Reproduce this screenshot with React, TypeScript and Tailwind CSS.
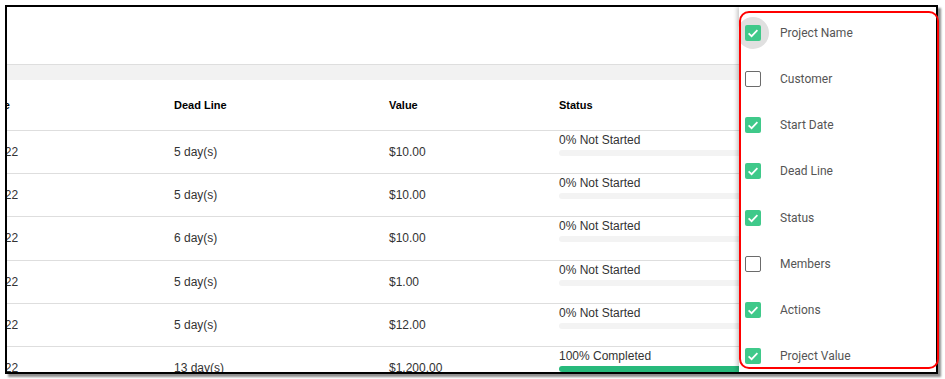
import React from "react";

const rows = [
  { date: "12/20/2022", dead: "5 day(s)", value: "$10.00", pct: 0, status: "0% Not Started" },
  { date: "12/20/2022", dead: "5 day(s)", value: "$10.00", pct: 0, status: "0% Not Started" },
  { date: "12/19/2022", dead: "6 day(s)", value: "$10.00", pct: 0, status: "0% Not Started" },
  { date: "12/20/2022", dead: "5 day(s)", value: "$1.00", pct: 0, status: "0% Not Started" },
  { date: "12/20/2022", dead: "5 day(s)", value: "$12.00", pct: 0, status: "0% Not Started" },
  { date: "12/12/2022", dead: "13 day(s)", value: "$1,200.00", pct: 100, status: "100% Completed" },
];

const options = [
  { label: "Project Name", checked: true, focus: true },
  { label: "Customer", checked: false },
  { label: "Start Date", checked: true },
  { label: "Dead Line", checked: true },
  { label: "Status", checked: true },
  { label: "Members", checked: false },
  { label: "Actions", checked: true },
  { label: "Project Value", checked: true },
];

function Box({ checked, focus }: { checked: boolean; focus?: boolean }) {
  return (
    <div className="relative w-[16px] h-[16px] shrink-0">
      {focus && (
        <div className="absolute left-[-8px] top-[-8px] w-[32px] h-[32px] rounded-full bg-[#e0e0e0]" />
      )}
      {checked ? (
        <div className="relative w-[16px] h-[16px] rounded-[2px] bg-[#3fc98a] flex items-center justify-center">
          <svg width="16" height="16" viewBox="0 0 16 16">
            <path d="M3.6 8.3 L6.6 11.2 L12.4 5.2" fill="none" stroke="white" strokeWidth="1.7" />
          </svg>
        </div>
      ) : (
        <div className="relative w-[16px] h-[16px] rounded-[2px] border-[1.5px] border-[#6b6b6b] bg-white" />
      )}
    </div>
  );
}

export default function App() {
  return (
    <div className="relative w-[945px] h-[379px] bg-white overflow-hidden" style={{ fontFamily: "Arial, 'Liberation Sans', sans-serif" }}>
      <div className="relative ml-[5px] mt-[5px] w-[933px] h-[369px] border-2 border-black overflow-hidden bg-white shadow-[3px_3px_2px_rgba(0,0,0,0.45)]">
        <div className="flex flex-col">
          <div className="h-[58px] border-b border-[#dedede]" />
          <div className="h-[15px] bg-[#f2f2f2]" />
          <div className="ml-[-49px] flex h-[51px] items-center border-b border-[#dedede] text-[11px] font-bold text-black">
            <div className="w-[216px] shrink-0">Start Date</div>
            <div className="w-[215px] shrink-0">Dead Line</div>
            <div className="w-[170px] shrink-0">Value</div>
            <div className="flex-1">Status</div>
          </div>
          {rows.map((r, i) => (
            <div key={i} className="ml-[-49px] flex h-[43.2px] items-center border-b border-[#dedede] text-[12px] text-[#333]">
              <div className="w-[216px] shrink-0">{r.date}</div>
              <div className="w-[215px] shrink-0">{r.dead}</div>
              <div className="w-[170px] shrink-0">{r.value}</div>
              <div className="flex-1 self-start pt-[2px] pr-[150px]">
                <div className="leading-[14px]">{r.status}</div>
                <div className="mt-[3px] h-[6px] rounded-[3px] bg-[#f3f3f3] overflow-hidden">
                  <div className="h-full bg-[#27b97b]" style={{ width: `${r.pct}%` }} />
                </div>
              </div>
            </div>
          ))}
        </div>

        <div className="absolute right-0 top-0 bottom-0 w-[197px] bg-white shadow-[-2px_0_4px_rgba(0,0,0,0.22)] pt-[3px]" style={{ fontFamily: "Roboto, Arial, sans-serif" }}>
          {options.map((o, i) => (
            <div key={i} className="flex h-[46.15px] items-center pl-[6px]">
              <Box checked={o.checked} focus={o.focus} />
              <span className="ml-[19px] text-[12px] text-[#555]">{o.label}</span>
            </div>
          ))}
        </div>
      </div>
      <div className="absolute left-[739px] top-[11px] w-[200px] h-[358px] border-2 border-[#ff0000] rounded-[10px] pointer-events-none" />
    </div>
  );
}
